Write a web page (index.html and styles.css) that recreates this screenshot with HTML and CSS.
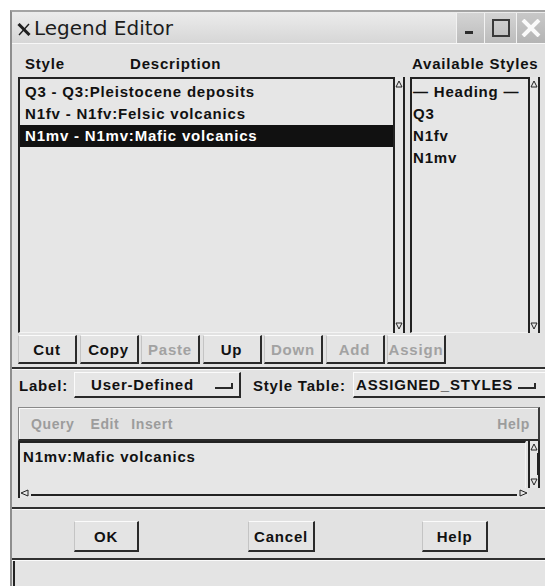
FILE: index.html
```html
<!DOCTYPE html>
<html>
<head>
<meta charset="utf-8">
<title>Legend Editor</title>
<link rel="stylesheet" href="styles.css">
</head>
<body>
<div class="window">
  <div class="titlebar">
    <svg class="app-icon" width="14" height="13" viewBox="0 0 14 13">
      <path d="M1.5 1 L12.5 12" stroke="#1e1e1e" stroke-width="3"/>
      <path d="M12 1 L2 12" stroke="#1e1e1e" stroke-width="1.4"/>
    </svg>
    <span class="title">Legend Editor</span>
    <div class="wm-buttons">
      <div class="wm wm-min"><span class="min-bar"></span></div>
      <div class="wm wm-max"><span class="max-box"></span></div>
      <div class="wm wm-close">
        <svg width="20" height="18" viewBox="0 0 20 18">
          <path d="M2 1 L18 17 M18 1 L2 17" stroke="#fafafa" stroke-width="4"/>
        </svg>
      </div>
    </div>
  </div>

  <div class="content">
    <div class="col-headers">
      <span class="hdr-style">Style</span>
      <span class="hdr-desc">Description</span>
      <span class="hdr-avail">Available Styles</span>
    </div>

    <div class="lists">
      <div class="listbox legend-list">
        <div class="item">Q3 - Q3:Pleistocene deposits</div>
        <div class="item">N1fv - N1fv:Felsic volcanics</div>
        <div class="item selected">N1mv - N1mv:Mafic volcanics</div>
      </div>
      <div class="vscroll">
        <svg class="arrow" width="8" height="8" viewBox="0 0 8 8"><path d="M4 1 L7 7 L1 7 Z" fill="none" stroke="#222" stroke-width="1"/></svg>
        <svg class="arrow" width="8" height="8" viewBox="0 0 8 8"><path d="M1 1 L7 1 L4 7 Z" fill="none" stroke="#222" stroke-width="1"/></svg>
      </div>
      <div class="listbox styles-list">
        <div class="item">— Heading —</div>
        <div class="item">Q3</div>
        <div class="item">N1fv</div>
        <div class="item">N1mv</div>
      </div>
      <div class="vscroll">
        <svg class="arrow" width="8" height="8" viewBox="0 0 8 8"><path d="M4 1 L7 7 L1 7 Z" fill="none" stroke="#222" stroke-width="1"/></svg>
        <svg class="arrow" width="8" height="8" viewBox="0 0 8 8"><path d="M1 1 L7 1 L4 7 Z" fill="none" stroke="#222" stroke-width="1"/></svg>
      </div>
    </div>

    <div class="toolbar">
      <button class="btn">Cut</button>
      <button class="btn">Copy</button>
      <button class="btn disabled">Paste</button>
      <button class="btn">Up</button>
      <button class="btn disabled">Down</button>
      <button class="btn disabled">Add</button>
      <button class="btn disabled">Assign</button>
    </div>

    <div class="sep"></div>

    <div class="label-row">
      <span class="field-label label-label">Label:</span>
      <div class="option-menu label-menu">
        <span>User-Defined</span>
        <span class="option-mark"></span>
      </div>
      <span class="field-label table-label">Style Table:</span>
      <div class="option-menu table-menu">
        <span>ASSIGNED_STYLES</span>
        <span class="option-mark"></span>
      </div>
    </div>

    <div class="menu-panel">
      <span class="menu-item m-query">Query</span>
      <span class="menu-item m-edit">Edit</span>
      <span class="menu-item m-insert">Insert</span>
      <span class="menu-item m-help">Help</span>
    </div>

    <div class="text-row">
      <div class="text-box">N1mv:Mafic volcanics</div>
      <div class="vscroll small">
        <svg class="arrow" width="8" height="8" viewBox="0 0 8 8"><path d="M4 1 L7 7 L1 7 Z" fill="none" stroke="#222" stroke-width="1"/></svg>
        <span class="thumb"></span>
        <svg class="arrow" width="8" height="8" viewBox="0 0 8 8"><path d="M1 1 L7 1 L4 7 Z" fill="none" stroke="#222" stroke-width="1"/></svg>
      </div>
    </div>
    <div class="hscroll">
      <svg class="arrow" width="9" height="8" viewBox="0 0 9 8"><path d="M1 4 L8 1 L8 7 Z" fill="none" stroke="#222" stroke-width="1"/></svg>
      <span class="track"></span>
      <svg class="arrow" width="9" height="8" viewBox="0 0 9 8"><path d="M8 4 L1 1 L1 7 Z" fill="none" stroke="#222" stroke-width="1"/></svg>
    </div>

    <div class="sep sep-low"></div>

    <div class="dialog-buttons">
      <button class="btn dlg ok">OK</button>
      <button class="btn dlg cancel">Cancel</button>
      <button class="btn dlg help">Help</button>
    </div>

    <div class="sep sep-status"></div>
    <div class="status"></div>
  </div>
</div>
</body>
</html>
```

FILE: styles.css
```css
html, body {
  margin: 0;
  padding: 0;
}

body {
  width: 545px;
  height: 586px;
  overflow: hidden;
  background: #ffffff;
  font-family: "Liberation Sans", Arial, sans-serif;
  font-weight: bold;
  font-size: 15px;
  letter-spacing: 0.8px;
  color: #111;
}

.window {
  margin: 10px 0 0 10px;
  width: 540px;
  height: 576px;
  box-sizing: border-box;
  border-left: 2px solid #8e8e8e;
  border-top: 2px solid #a4a4a4;
  background: #e2e2e2;
  display: flex;
  flex-direction: column;
}

/* ---- title bar ---- */
.titlebar {
  height: 31px;
  flex: none;
  display: flex;
  align-items: center;
  background: linear-gradient(#ececec, #d6d6d6);
  border-bottom: 1px solid #f7f7f7;
}

.app-icon {
  margin-left: 5px;
  margin-top: 4px;
}

.title {
  margin-left: 3px;
  font-family: "DejaVu Sans", sans-serif;
  font-weight: normal;
  font-size: 20px;
  letter-spacing: 0;
  color: #1c1c1c;
}

.wm-buttons {
  margin-left: auto;
  display: flex;
  align-self: stretch;
}

.wm {
  height: 30px;
  margin-top: 1px;
  border-left: 1px solid #f2f2f2;
  background: linear-gradient(#d4d4d4, #bcbcbc);
  display: flex;
  align-items: center;
  justify-content: center;
}

.wm-min {
  width: 27px;
  align-items: flex-end;
  justify-content: flex-start;
}

.min-bar {
  width: 8px;
  height: 3px;
  background: #2c2c2c;
  margin: 0 0 9px 8px;
}

.wm-max {
  width: 31px;
}

.max-box {
  width: 14px;
  height: 14px;
  border: 2px solid #3a3a3a;
}

.wm-close {
  width: 34px;
  justify-content: flex-start;
  padding-left: 4px;
  box-sizing: border-box;
  background: linear-gradient(#c8c8c8, #b4b4b4);
}

/* ---- main area ---- */
.content {
  flex: 1;
  display: flex;
  flex-direction: column;
  padding-left: 6px;
}

.col-headers {
  height: 33px;
  flex: none;
  display: flex;
  align-items: flex-end;
  padding-bottom: 5px;
  box-sizing: border-box;
}

.hdr-style {
  width: 105px;
  padding-left: 7px;
}

.hdr-desc {
  width: 282px;
}

.hdr-avail {
  white-space: nowrap;
}

.lists {
  height: 256px;
  flex: none;
  display: flex;
}

.listbox {
  box-sizing: border-box;
  border-top: 2px solid #222;
  border-left: 2px solid #222;
  border-bottom: 1px solid #f4f4f4;
  background: #e6e6e6;
  padding-top: 2px;
}

.legend-list {
  width: 375px;
}

.styles-list {
  width: 118px;
  margin-left: 5px;
  padding-left: 1px;
  overflow: hidden;
}

.item {
  height: 22px;
  line-height: 22px;
  white-space: nowrap;
}

.legend-list .item {
  padding-left: 5px;
}

.item.selected {
  background: #111;
  color: #fff;
}

.vscroll {
  width: 12px;
  box-sizing: border-box;
  border-left: 2px solid #222;
  border-right: 2px solid #222;
  background: #e6e6e6;
  display: flex;
  flex-direction: column;
  justify-content: space-between;
  align-items: center;
  padding: 3px 0 3px;
}

.arrow {
  display: block;
  flex: none;
}

/* ---- push buttons ---- */
.btn {
  font-family: "Liberation Sans", Arial, sans-serif;
  font-weight: bold;
  font-size: 15px;
  letter-spacing: 0.8px;
  color: #111;
  background: #e4e4e4;
  box-sizing: border-box;
  border-top: 1px solid #fbfbfb;
  border-left: 1px solid #c4c4c4;
  border-right: 2px solid #2a2a2a;
  border-bottom: 2px solid #2a2a2a;
  padding: 0;
  margin: 0;
  white-space: nowrap;
}

.btn.disabled {
  color: #a2a2a2;
}

.toolbar {
  margin-top: 2px;
  height: 29px;
  flex: none;
  display: flex;
  gap: 2.5px;
}

.toolbar .btn {
  width: 59px;
  height: 29px;
}

.sep {
  flex: none;
  margin-top: 3px;
  margin-left: -6px;
  border-top: 2px solid #303030;
  border-bottom: 1px solid #fafafa;
}

/* ---- option menus ---- */
.label-row {
  margin-top: 2px;
  height: 26px;
  flex: none;
  display: flex;
  align-items: center;
}

.label-label {
  width: 55px;
  padding-left: 1px;
}

.table-label {
  width: 100px;
  margin-left: 12px;
  white-space: nowrap;
}

.option-menu {
  height: 26px;
  box-sizing: border-box;
  display: flex;
  align-items: center;
  background: #e6e6e6;
  border-top: 1px solid #fbfbfb;
  border-left: 1px solid #fbfbfb;
  border-right: 2px solid #2a2a2a;
  border-bottom: 2px solid #2a2a2a;
  white-space: nowrap;
}

.label-menu {
  width: 167px;
  padding-left: 16px;
}

.table-menu {
  flex: 1;
  padding-left: 2px;
  border-right: none;
}

.option-mark {
  width: 16px;
  height: 4px;
  margin-left: auto;
  margin-right: 6px;
  margin-top: 2px;
  border-bottom: 2px solid #2a2a2a;
  border-right: 2px solid #2a2a2a;
}

.table-menu .option-mark {
  margin-left: 5px;
}

/* ---- menu bar ---- */
.menu-panel {
  margin-top: 9px;
  width: 522px;
  height: 34px;
  flex: none;
  box-sizing: border-box;
  display: flex;
  align-items: center;
  border-top: 1px solid #8a8a8a;
  border-left: 1px solid #8a8a8a;
  border-right: 2px solid #3a3a3a;
  border-bottom: 2px solid #2a2a2a;
  box-shadow: inset 1px 1px 0 #fafafa;
  font-size: 14px;
  letter-spacing: 0.6px;
  color: #9c9c9c;
}

.m-query { margin-left: 12px; }
.m-edit { margin-left: 16px; }
.m-insert { margin-left: 12px; }
.m-help { margin-left: auto; margin-right: 8px; }

/* ---- text field ---- */
.text-row {
  height: 47px;
  flex: none;
  display: flex;
  gap: 2px;
}

.text-box {
  width: 508px;
  box-sizing: border-box;
  border-top: 2px solid #222;
  border-left: 2px solid #222;
  border-right: 1px solid #f4f4f4;
  background: #e6e6e6;
  padding: 5px 0 0 3px;
}

.vscroll.small {
  padding: 2px 0;
  justify-content: flex-start;
  gap: 1px;
}

.vscroll.small .thumb {
  width: 5px;
  flex: 1;
  border-right: 2px solid #222;
  margin: 1px 0 2px 3px;
}

.hscroll {
  width: 510px;
  height: 10px;
  flex: none;
  display: flex;
  align-items: center;
  box-sizing: border-box;
  border-left: 2px solid #222;
  background: #e6e6e6;
}

.hscroll .track {
  flex: 1;
  height: 4px;
  border-bottom: 2px solid #222;
  margin: 0 2px;
}

.sep-low {
  margin-top: 9px;
}

/* ---- dialog buttons ---- */
.dialog-buttons {
  margin-top: 11px;
  height: 31px;
  flex: none;
  display: flex;
}

.dlg {
  height: 31px;
}

.ok {
  width: 65px;
  margin-left: 56px;
}

.cancel {
  width: 67px;
  margin-left: 109px;
}

.help {
  width: 66px;
  margin-left: 107px;
}

.sep-status {
  margin-top: 6px;
}

.status {
  flex: 1;
  margin-left: -5px;
  border-left: 2px solid #222;
  background: #e4e4e4;
}
```
